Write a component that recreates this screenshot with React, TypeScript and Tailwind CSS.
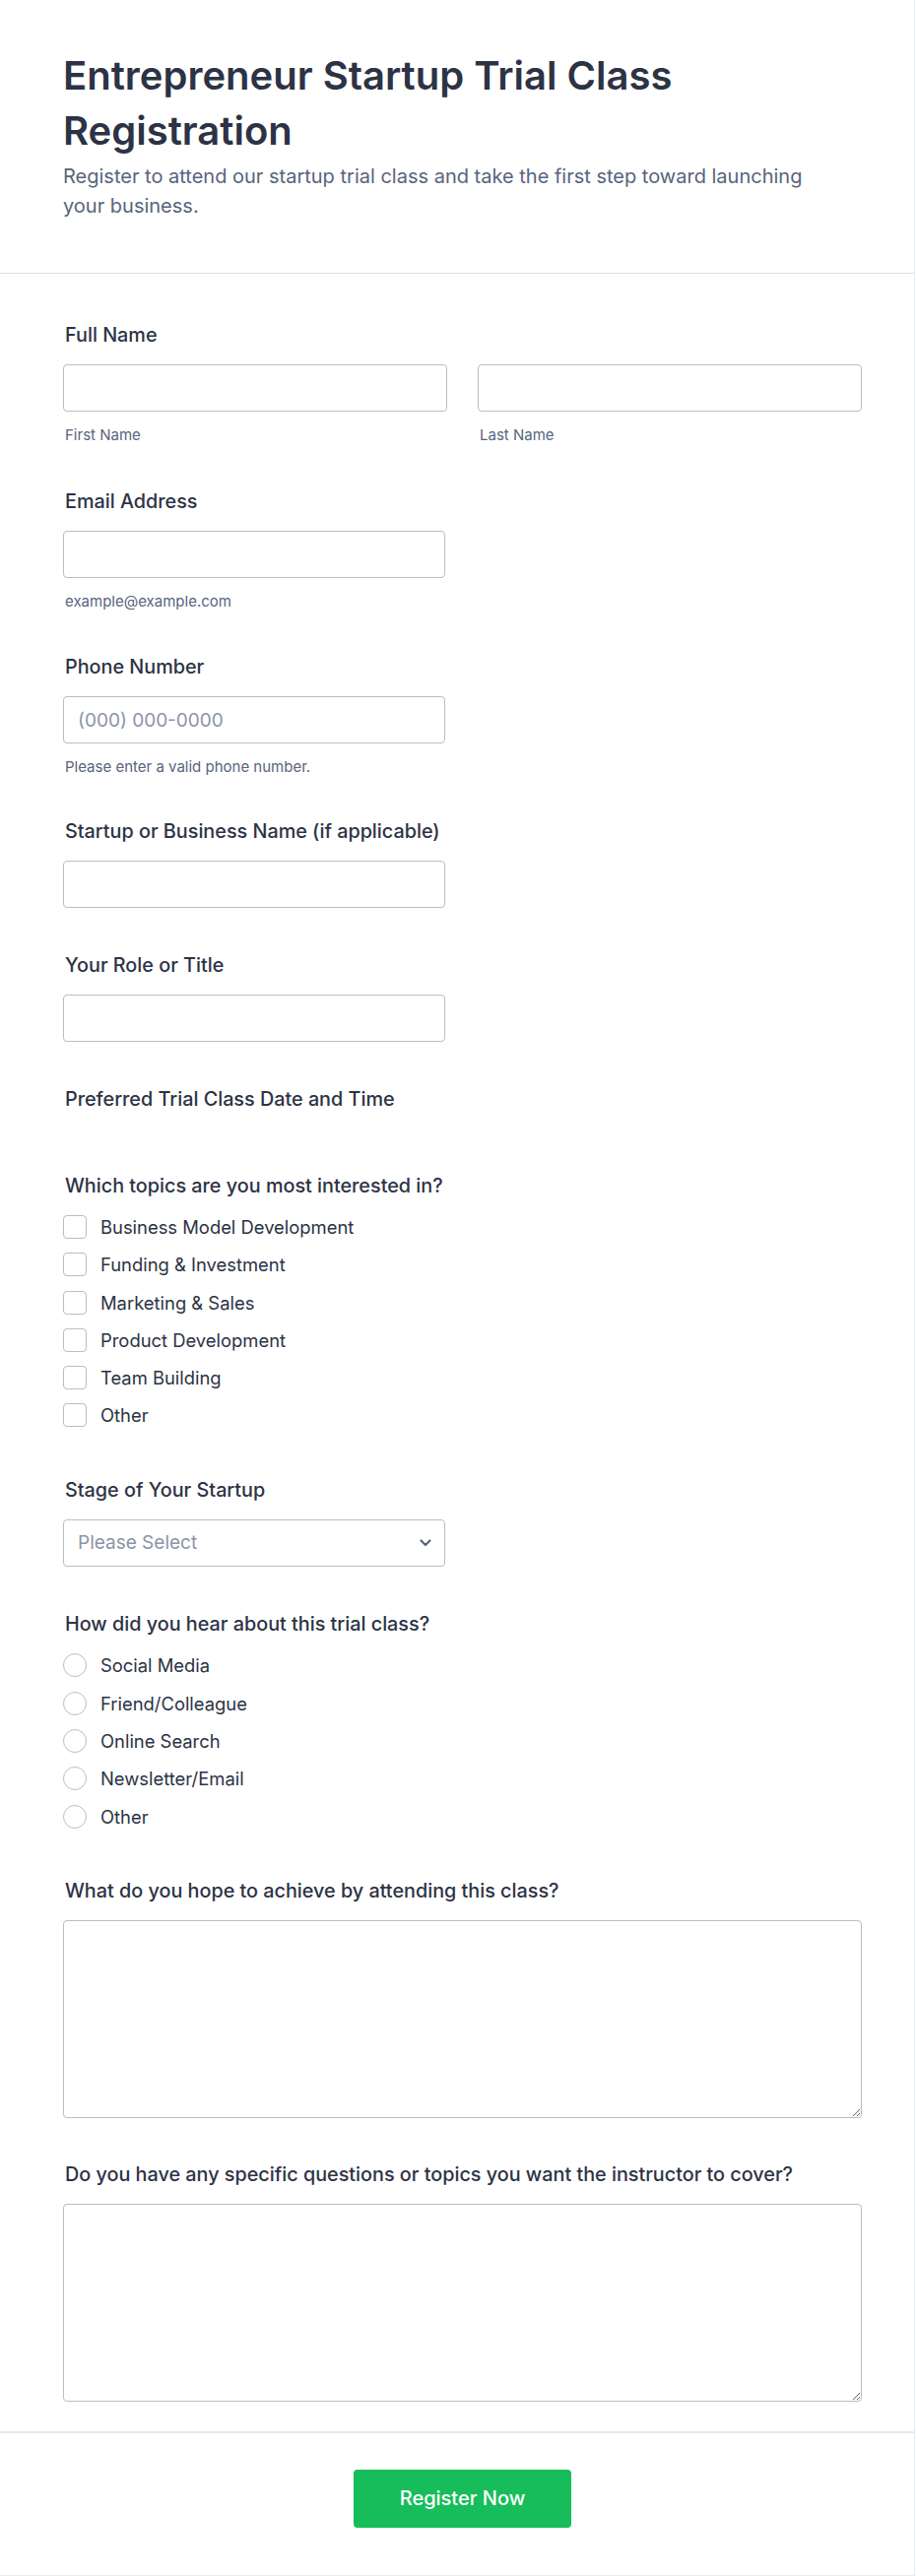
import React from "react";

const labelCls = "block pl-[2px] text-[19.8px] leading-[28px] font-medium text-[#2c3345]";
const inputCls =
  "block h-[48px] rounded-[4px] border border-[#b8bdc9] bg-white px-[14px] text-[19px] text-[#2c3345] placeholder:text-[#8c93a5] outline-none";
const subCls = "mt-[15px] pl-[2px] text-[15px] leading-[18px] text-[#57647e]";

function Label({ children }: { children: React.ReactNode }) {
  return <div className={`${labelCls} mb-[16px]`}>{children}</div>;
}

function Checkbox({ text }: { text: string }) {
  return (
    <div className="flex items-center h-[24px]">
      <div className="w-[24px] h-[24px] rounded-[4px] border border-[#b8bdc9] bg-white shrink-0" />
      <span className="ml-[14px] text-[18.4px] leading-[24px] text-[#2c3345]">{text}</span>
    </div>
  );
}

function Radio({ text }: { text: string }) {
  return (
    <div className="flex items-center h-[24px]">
      <div className="w-[24px] h-[24px] rounded-full border border-[#b8bdc9] bg-white shrink-0" />
      <span className="ml-[14px] text-[18.4px] leading-[24px] text-[#2c3345]">{text}</span>
    </div>
  );
}

export default function App() {
  return (
    <div className="w-[929px] h-[2616px] bg-white border-r border-b border-[#e9ebf2] font-[Inter,'Noto_Sans',sans-serif] text-[#2c3345]">
      <header className="pl-[64px] pt-[49px] pb-[53px] border-b border-[#dcdfe8]">
        <h1 className="w-[760px] text-[40px] leading-[56px] font-semibold text-[#2c3345]">
          Entrepreneur Startup Trial Class Registration
        </h1>
        <p className="mt-[3px] w-[790px] text-[20px] leading-[30px] text-[#57647e]">
          Register to attend our startup trial class and take the first step toward launching your business.
        </p>
      </header>

      <main className="pl-[64px] pt-[48px] pb-[30px] border-b-2 border-[#e6e8ef]">
        <div className="w-[811px]">
          {/* Full Name */}
          <div className="mb-[44px]">
            <Label>Full Name</Label>
            <div className="grid grid-cols-2 gap-[31px]">
              <div>
                <input className={`${inputCls} w-[390px]`} />
                <div className={subCls}>First Name</div>
              </div>
              <div>
                <input className={`${inputCls} w-[390px]`} />
                <div className={subCls}>Last Name</div>
              </div>
            </div>
          </div>

          {/* Email */}
          <div className="mb-[43px]">
            <Label>Email Address</Label>
            <input className={`${inputCls} w-[388px]`} />
            <div className={subCls}>example@example.com</div>
          </div>

          {/* Phone */}
          <div className="mb-[42px]">
            <Label>Phone Number</Label>
            <input className={`${inputCls} w-[388px]`} placeholder="(000) 000-0000" />
            <div className={subCls}>Please enter a valid phone number.</div>
          </div>

          {/* Startup */}
          <div className="mb-[44px]">
            <Label>Startup or Business Name (if applicable)</Label>
            <input className={`${inputCls} w-[388px]`} />
          </div>

          {/* Role */}
          <div className="mb-[44px]">
            <Label>Your Role or Title</Label>
            <input className={`${inputCls} w-[388px]`} />
          </div>

          {/* Preferred */}
          <div className="mb-[60px]">
            <div className={labelCls}>Preferred Trial Class Date and Time</div>
          </div>

          {/* Topics */}
          <div className="mb-[50px]">
            <Label>Which topics are you most interested in?</Label>
            <div className="flex flex-col gap-[14.3px]">
              <Checkbox text="Business Model Development" />
              <Checkbox text="Funding & Investment" />
              <Checkbox text="Marketing & Sales" />
              <Checkbox text="Product Development" />
              <Checkbox text="Team Building" />
              <Checkbox text="Other" />
            </div>
          </div>

          {/* Stage */}
          <div className="mb-[44px]">
            <Label>Stage of Your Startup</Label>
            <div className="relative flex items-center w-[388px] h-[48px] rounded-[4px] border border-[#b8bdc9] bg-white px-[14px]">
              <span className="text-[19px] text-[#8c93a5]">Please Select</span>
              <svg
                className="absolute right-[13px] top-1/2 -translate-y-1/2"
                width="12"
                height="8"
                viewBox="0 0 12 8"
                fill="none"
              >
                <path d="M1.5 1.5L6 6L10.5 1.5" stroke="#57647e" strokeWidth="2.2" strokeLinecap="round" strokeLinejoin="round" />
              </svg>
            </div>
          </div>

          {/* How */}
          <div className="mb-[49px]">
            <Label>How did you hear about this trial class?</Label>
            <div className="flex flex-col gap-[14.3px]">
              <Radio text="Social Media" />
              <Radio text="Friend/Colleague" />
              <Radio text="Online Search" />
              <Radio text="Newsletter/Email" />
              <Radio text="Other" />
            </div>
          </div>

          {/* What */}
          <div className="mb-[43px]">
            <Label>What do you hope to achieve by attending this class?</Label>
            <textarea className="block w-[811px] h-[201px] rounded-[4px] border border-[#b8bdc9] bg-white px-[14px] py-[10px] text-[19px] outline-none resize" />
          </div>

          {/* Do you have */}
          <div>
            <Label>Do you have any specific questions or topics you want the instructor to cover?</Label>
            <textarea className="block w-[811px] h-[201px] rounded-[4px] border border-[#b8bdc9] bg-white px-[14px] py-[10px] text-[19px] outline-none resize" />
          </div>
        </div>
      </main>

      <footer className="flex justify-center pt-[37px]">
        <button className="ml-[11px] w-[221px] h-[59px] rounded-[4px] bg-[#18bd5b] text-white text-[20px] font-medium">
          Register Now
        </button>
      </footer>
    </div>
  );
}
